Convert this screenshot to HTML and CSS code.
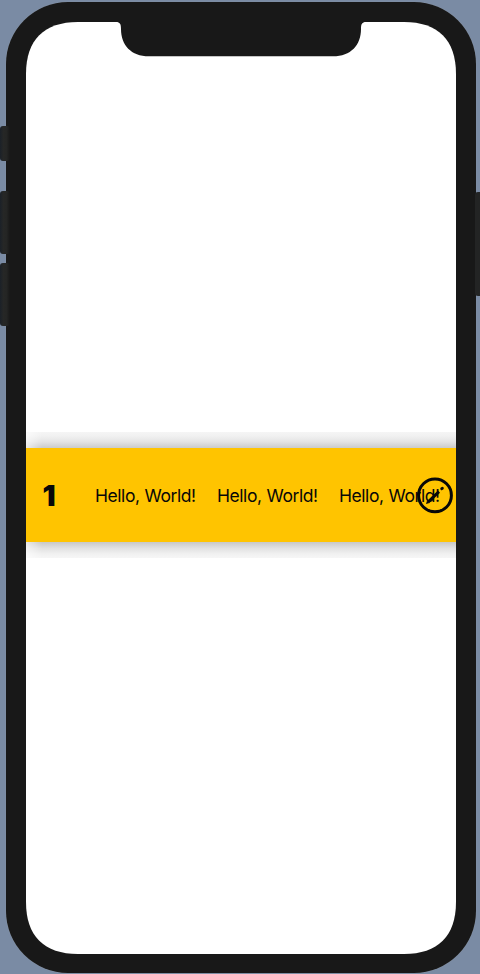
FILE: index.html
```html
<!DOCTYPE html>
<html lang="en">
<head>
<meta charset="utf-8">
<title>Hello, World!</title>
<link rel="stylesheet" href="styles.css">
</head>
<body>
<div class="device">
  <span class="key key-mute"></span>
  <span class="key key-up"></span>
  <span class="key key-down"></span>
  <span class="key key-power"></span>
  <main class="screen">
    <svg class="notch" width="250" height="35" viewBox="0 0 250 35" aria-hidden="true"><path d="M0 0C4 0 5 2 5 7C5 23 15 34.3 33 34.3H217C235 34.3 245 23 245 7C245 2 246 0 250 0Z"/></svg>
    <div class="shade shade-top"></div>
    <section class="row">
      <strong class="number">1</strong>
      <div class="labels">
        <span>Hello, World!</span>
        <span>Hello, World!</span>
        <span>Hello, World!</span>
      </div>
      <svg class="edit" width="36" height="37" viewBox="0 -0.4 36 37" aria-label="Edit"><circle cx="18" cy="18" r="16.4"/><path class="shaft" d="M11 24.8L22 14.2"/><path class="tip" d="M9 26.7L10 23.4L12.4 25.6Z"/><path class="cap" d="M24.8 11.3L25.3 10.9"/></svg>
    </section>
    <div class="shade shade-bottom"></div>
  </main>
</div>
</body>
</html>
```

FILE: styles.css
```css
* {
  box-sizing: border-box;
}

body {
  margin: 0;
  width: 480px;
  height: 974px;
  overflow: hidden;
  background: #7a8ba4;
  font-family: Inter, "Liberation Sans", sans-serif;
  color: #080808;
}

.device {
  position: relative;
  width: 470px;
  height: 971px;
  margin: 2px 4px 1px 6px;
  padding: 20px;
  border-radius: 62px;
  background: #181818;
  box-shadow: 0 0 1px #98a1ad;
}

.key {
  position: absolute;
  left: -6px;
  width: 10px;
  border-radius: 3px;
  background: linear-gradient(90deg, #1b2128, #262726 35%, #242524 65%, #181818);
}

.key-mute {
  top: 124px;
  height: 35px;
}

.key-up {
  top: 189px;
  height: 63px;
}

.key-down {
  top: 261px;
  height: 63px;
}

.key-power {
  top: 190px;
  left: 469px;
  width: 8px;
  height: 104px;
  background: #232424;
}

.screen {
  position: relative;
  display: flex;
  flex-direction: column;
  justify-content: center;
  width: 430px;
  height: 932px;
  padding-top: 14px;
  background: #fff;
  clip-path: path("M52 0H378C412 0 430 18 430 52V880C430 914 412 932 378 932H52C18 932 0 914 0 880V52C0 18 18 0 52 0Z");
}

.notch {
  position: absolute;
  top: 0;
  left: 90px;
  fill: #181818;
}

.shade {
  flex: none;
  height: 16px;
  background: linear-gradient(#f5f5f5, #f1f1f1 25%, #e4e4e4 60%, #cbcbcb);
  -webkit-mask-image: linear-gradient(90deg, rgba(0, 0, 0, 0.4), #000 16px);
  mask-image: linear-gradient(90deg, rgba(0, 0, 0, 0.4), #000 16px);
}

.shade-bottom {
  background: linear-gradient(#c8c8c8, #e2e2e2 40%, #f1f1f1 75%, #f6f6f6);
}

.row {
  position: relative;
  flex: none;
  display: flex;
  align-items: center;
  height: 94px;
  padding: 2px 0 0 16.5px;
  background: #ffc400;
}

.number {
  flex: none;
  width: 52.5px;
  font-size: 29px;
  font-weight: 900;
  line-height: 34px;
}

.labels {
  display: flex;
  flex: none;
  font-size: 17.5px;
  letter-spacing: -0.45px;
  word-spacing: 0.6px;
  line-height: 22px;
  white-space: nowrap;
}

.labels span {
  width: 122px;
  flex: none;
}

.edit {
  position: absolute;
  top: 29px;
  left: 391px;
  fill: none;
  stroke: #080808;
  stroke-width: 3;
}

.tip {
  fill: #080808;
  stroke: none;
}

.cap {
  stroke-linecap: round;
}
```
